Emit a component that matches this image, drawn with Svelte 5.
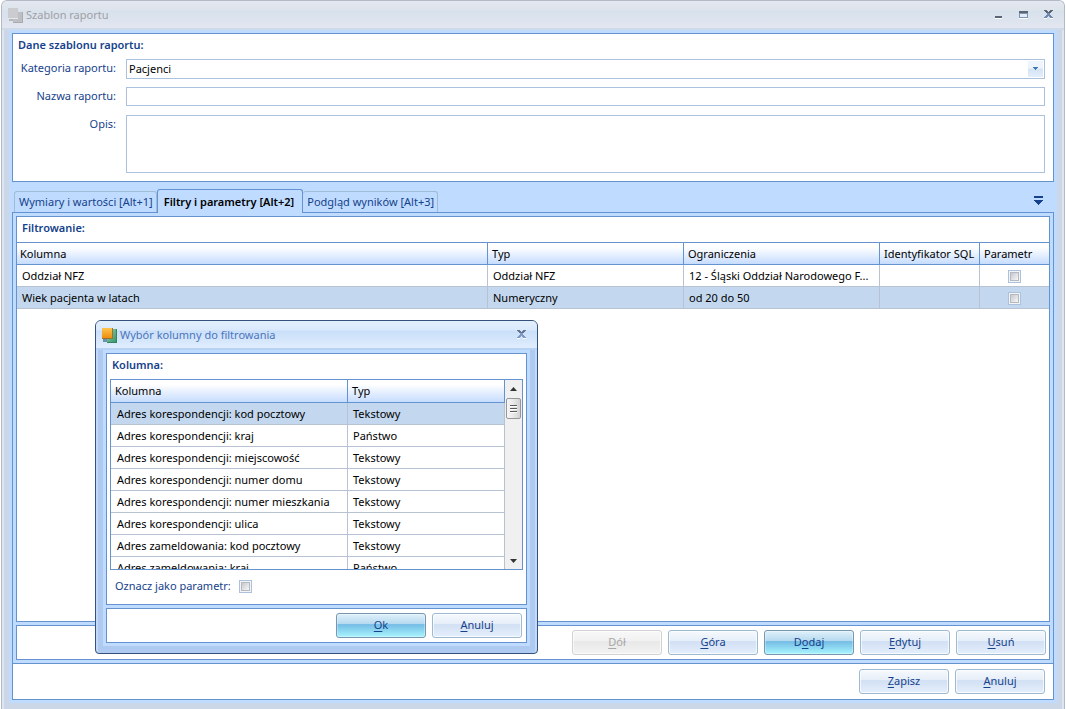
<script>
  const filters = [
    { column: 'Oddział NFZ', type: 'Oddział NFZ', limit: '12 - Śląski Oddział Narodowego F...', selected: false },
    { column: 'Wiek pacjenta w latach', type: 'Numeryczny', limit: 'od 20 do 50', selected: true }
  ];
  const columns = [
    ['Adres korespondencji: kod pocztowy', 'Tekstowy'],
    ['Adres korespondencji: kraj', 'Państwo'],
    ['Adres korespondencji: miejscowość', 'Tekstowy'],
    ['Adres korespondencji: numer domu', 'Tekstowy'],
    ['Adres korespondencji: numer mieszkania', 'Tekstowy'],
    ['Adres korespondencji: ulica', 'Tekstowy'],
    ['Adres zameldowania: kod pocztowy', 'Tekstowy'],
    ['Adres zameldowania: kraj', 'Państwo']
  ];
  let category = $state('Pacjenci');
</script>

<div class="window">
  <header class="titlebar">
    <svg class="logo" width="16" height="16" viewBox="0 0 16 16" shape-rendering="crispEdges" aria-hidden="true">
      <path d="M5 4h10v11H5z" fill="#bdbfc2" /><path d="M5 14h10v1H5zM14 4h1v11h-1z" fill="#a9abae" />
      <path d="M1 9h4v4H1z" fill="#b6b8bb" /><path d="M0 0h10v11H0z" fill="#e4e8ee" /><path d="M0 0h10v10H0z" fill="#cbcccf" />
    </svg>
    <h1>Szablon raportu</h1>
    <div class="winbuttons">
      <button aria-label="Minimalizuj"><svg width="9" height="10" viewBox="0 0 9 10" shape-rendering="crispEdges"><path d="M1 6h7v2H1z" fill="#5b6573" /><path d="M1 8h7v1H1z" fill="#fff" /></svg></button>
      <button aria-label="Maksymalizuj"><svg width="9" height="10" viewBox="0 0 9 10" shape-rendering="crispEdges"><path d="M0 1h9v7H0z" fill="#7c93b5" /><path d="M0 1h9v2H0z" fill="#5b6573" /><path d="M1 4h7v3H1z" fill="#e6ecf5" /><path d="M0 8h9v1H0z" fill="#fff" /></svg></button>
      <button aria-label="Zamknij"><svg width="9" height="10" viewBox="0 0 9 10" shape-rendering="crispEdges"><path d="M0 8h3v1H0zM6 8h3v1H6z" fill="#fff" /><path d="M0 0h3v1H0zM6 0h3v1H6zM1 1h3v1H1zM5 1h3v1H5zM2 2h5v1H2z" fill="#5b6573" /><path d="M3 3h3v2H3zM2 5h5v1H2zM1 6h3v1H1zM5 6h3v1H5zM0 7h3v1H0zM6 7h3v1H6z" fill="#7189b0" /></svg></button>
    </div>
  </header>

  <main class="content">
    <section class="panel data">
      <h2>Dane szablonu raportu:</h2>
      <div class="form">
        <label for="cat">Kategoria raportu:</label>
        <div class="combo">
          <select id="cat" bind:value={category}><option>Pacjenci</option></select>
          <span class="drop"><svg width="5" height="4" viewBox="0 0 5 4" shape-rendering="crispEdges"><path d="M0 0h5v1H0zM1 1h3v1H1zM2 2h1v1H2z" fill="#3f78b5" /></svg></span>
        </div>
        <label for="name">Nazwa raportu:</label>
        <input id="name" type="text" />
        <label for="desc">Opis:</label>
        <textarea id="desc"></textarea>
      </div>
    </section>

    <nav class="tabs">
      <button class="tab">Wymiary i wartości [Alt+1]</button>
      <button class="tab active">Filtry i parametry [Alt+2]</button>
      <button class="tab">Podgląd wyników [Alt+3]</button>
      <button class="more" aria-label="Więcej"><svg width="9" height="9" viewBox="0 0 9 9" shape-rendering="crispEdges"><path d="M0 0h9v2H0zM0 4h9v1H0zM1 5h7v1H1zM2 6h5v1H2zM3 7h3v1H3zM4 8h1v1H4z" fill="#15428b" /></svg></button>
    </nav>

    <section class="tabpage">
      <div class="panel filters">
        <h2>Filtrowanie:</h2>
        <table>
          <colgroup><col /><col class="c-wide" /><col class="c-wide" /><col class="c-sql" /><col class="c-par" /></colgroup>
          <thead><tr><th>Kolumna</th><th>Typ</th><th>Ograniczenia</th><th>Identyfikator SQL</th><th>Parametr</th></tr></thead>
          <tbody>
            {#each filters as f}
              <tr class:selected={f.selected}>
                <td>{f.column}</td><td>{f.type}</td><td>{f.limit}</td><td></td>
                <td class="center"><input type="checkbox" aria-label="Parametr" /></td>
              </tr>
            {/each}
          </tbody>
        </table>
      </div>
      <div class="panel actions">
        <button class="btn" disabled><u>D</u>ół</button>
        <button class="btn"><u>G</u>óra</button>
        <button class="btn primary">D<u>o</u>daj</button>
        <button class="btn"><u>E</u>dytuj</button>
        <button class="btn"><u>U</u>suń</button>
      </div>
    </section>
    <footer class="footer">
      <button class="btn"><u>Z</u>apisz</button>
      <button class="btn"><u>A</u>nuluj</button>
    </footer>
  </main>
</div>

<div class="dialog" role="dialog" aria-labelledby="dlg-title">
  <header class="titlebar">
    <svg class="logo" width="16" height="16" viewBox="0 0 16 16" shape-rendering="crispEdges" aria-hidden="true">
      <defs>
        <linearGradient id="orange" x1="0" y1="0" x2="0" y2="1"><stop offset="0" stop-color="#fcc54e" /><stop offset="1" stop-color="#ee8d11" /></linearGradient>
        <linearGradient id="green" x1="0" y1="0" x2="1" y2="1"><stop offset="0" stop-color="#8fd0ad" /><stop offset="1" stop-color="#2f9468" /></linearGradient>
      </defs>
      <path d="M5 1h10v14H5z" fill="url(#green)" /><path d="M5 14h10v1H5zM14 1h1v14h-1z" fill="#33835f" />
      <path d="M1 10h4v4H1z" fill="#6f8fae" /><path d="M0 0h11v11H0z" fill="#9a7130" /><path d="M0 0h10v10H0z" fill="url(#orange)" />
    </svg>
    <h1 id="dlg-title">Wybór kolumny do filtrowania</h1>
    <div class="winbuttons">
      <button aria-label="Zamknij"><svg width="9" height="10" viewBox="0 0 9 10" shape-rendering="crispEdges"><path d="M0 8h3v1H0zM6 8h3v1H6z" fill="#fff" /><path d="M0 0h3v1H0zM6 0h3v1H6zM1 1h3v1H1zM5 1h3v1H5zM2 2h5v1H2z" fill="#65758f" /><path d="M3 3h3v2H3zM2 5h5v1H2zM1 6h3v1H1zM5 6h3v1H5zM0 7h3v1H0zM6 7h3v1H6z" fill="#7d99c4" /></svg></button>
    </div>
  </header>
  <div class="dialog-body">
    <section class="panel picker">
      <h2>Kolumna:</h2>
      <div class="list">
        <div class="rows">
          <table>
            <colgroup><col /><col class="c-type" /></colgroup>
            <thead><tr><th>Kolumna</th><th>Typ</th></tr></thead>
            <tbody>
              {#each columns as [name, type], i}
                <tr class:selected={i === 0}><td>{name}</td><td>{type}</td></tr>
              {/each}
            </tbody>
          </table>
        </div>
        <div class="scrollbar" aria-hidden="true">
          <svg class="arrow" width="7" height="4" viewBox="0 0 7 4"><path d="M0 4L3.5 0L7 4z" fill="#333" /></svg>
          <span class="thumb"><svg width="7" height="8" viewBox="0 0 7 8" shape-rendering="crispEdges"><path d="M0 0h7v1H0zM0 3h7v1H0zM0 6h7v1H0z" fill="#5a5a5a" /><path d="M0 1h7v1H0zM0 4h7v1H0zM0 7h7v1H0z" fill="#fff" /></svg></span>
          <svg class="arrow down" width="7" height="4" viewBox="0 0 7 4"><path d="M0 0L3.5 4L7 0z" fill="#333" /></svg>
        </div>
      </div>
      <div class="mark">
        <label for="mark">Oznacz jako parametr:</label>
        <input id="mark" type="checkbox" />
      </div>
    </section>
    <div class="panel actions">
      <button class="btn primary"><u>O</u>k</button>
      <button class="btn"><u>A</u>nuluj</button>
    </div>
  </div>
</div>

<style>
  :global(body) { background: #fff; }
  .window, .dialog, button, input, select, textarea { font: 11px/16px "Noto Sans", "Open Sans", sans-serif; }
  .window, .dialog, .window *, .dialog * { box-sizing: border-box; }
  button { padding: 0; margin: 0; border: 0; background: none; color: inherit; }
  svg { display: block; }
  h1, h2 { margin: 0; font-size: 11px; line-height: 16px; }
  h2 { font-weight: 600; }

  .window {
    min-height: 100vh;
    margin: 0 1px;
    display: flex;
    flex-direction: column;
    border: 1px solid #b4bac5;
    border-bottom: 0;
    border-radius: 6px 6px 0 0;
    overflow: hidden;
    background: #cbd7e7;
    box-shadow: inset 2px 0 #dce5f1, inset -2px 0 #dce5f1;
    color: #15428b;
  }
  .titlebar {
    display: flex;
    align-items: center;
    height: 29px;
    padding: 0 11px 0 6px;
    background: linear-gradient(#e3e7f0, #dee4ec 9px, #d7e1ec 10px, #e2e6f0 26px);
    border-bottom: 2px solid #cfdae8;
    color: #a0a0a3;
  }
  .logo { margin-top: 3px; }
  .titlebar h1 { flex: 1; font-weight: 400; padding-left: 2px; }
  .winbuttons { display: flex; gap: 16px; }
  .content {
    flex: 1;
    display: flex;
    flex-direction: column;
    margin: 0 7px 6px;
    padding: 3px;
    background: #bfdbff;
  }
  .panel { background: #fff; border: 1px solid #6593cf; }
  .data { padding: 3px 8px 8px 5px; }
  .form {
    display: grid;
    grid-template-columns: 98px 1fr;
    grid-template-rows: 20px 20px auto;
    column-gap: 10px;
    row-gap: 8px;
    padding-top: 6px;
  }
  .form label { text-align: right; height: 16px; padding-top: 1px; }
  .form input, .form textarea, .combo {
    border: 1px solid #abc1de;
    border-radius: 0;
    background: #fff;
    width: 100%;
    height: 20px;
    padding: 0 2px;
    margin: 0;
    outline: 0;
    resize: none;
    display: block;
  }
  .form input { height: 19px; }
  .form textarea { height: 58px; }
  .form .combo { display: flex; padding: 1px; }
  .combo select { flex: 1; appearance: none; border: 0; padding: 0 1px; background: none; color: #000; outline: 0; }
  .drop {
    width: 15px;
    display: grid;
    place-items: center;
    background: linear-gradient(#eef4fc 45%, #d3e2f5 50%, #e3eefb);
  }

  .tabs { display: flex; align-items: flex-end; height: 30px; padding: 0 2px; }
  .tab {
    height: 21px;
    padding: 0 3px 0 4px;
    border: 1px solid #9fbbd6;
    border-bottom: 0;
    border-radius: 3px 3px 0 0;
    white-space: nowrap;
  }
  .tab + .tab { border-left: 0; }
  .tab.active {
    height: 24px;
    padding: 0 8px 0 6px;
    margin-bottom: -1px;
    border: 1px solid #6593cf;
    border-bottom: 0;
    background: #bfdbff;
    font-weight: 600;
    color: #000;
    z-index: 1;
  }
  .more { margin: 0 9px 7px auto; }
  .tabpage {
    flex: 1;
    display: flex;
    flex-direction: column;
    gap: 3px;
    padding: 3px;
    border: 1px solid #6593cf;
    border-bottom: 0;
  }
  .filters { flex: 1; }
  .filters h2 { padding: 3px 5px 6px; }
  table { width: 100%; table-layout: fixed; border-collapse: separate; border-spacing: 0; color: #000; }
  .c-wide { width: 196px; }
  .c-sql { width: 100px; }
  .c-par { width: 69px; }
  .c-type { width: 157px; }
  th {
    height: 23px;
    padding: 0 4px;
    text-align: left;
    font-weight: 400;
    white-space: nowrap;
    border: solid #6593cf;
    border-width: 1px 1px 1px 0;
    background: linear-gradient(#fff 20%, #e3eeff 60%, #c6dcfe);
  }
  td {
    height: 22px;
    padding: 0 5px;
    white-space: nowrap;
    overflow: hidden;
    text-overflow: ellipsis;
    border: solid #b7c2d3;
    border-width: 0 1px 1px 0;
  }
  .filters th:first-child { padding-left: 3px; }
  .filters th:last-child, .filters td:last-child { border-right: 0; }
  .rows td:first-child { padding-left: 6px; }
  .selected td { background: #c3d8ef; }
  .center { text-align: center; }
  input[type="checkbox"] {
    appearance: none;
    width: 13px;
    height: 13px;
    margin: 0;
    vertical-align: middle;
    border: 1px solid #abc1de;
    box-shadow: inset 0 0 0 1px #f4f4f4, inset 0 0 0 2px #b4b9c2;
    background: linear-gradient(135deg, #c9cdd4 25%, #f6f6f6 80%);
  }
  .actions { display: flex; justify-content: flex-end; gap: 6px; padding: 4px 3px; }
  .btn {
    width: 90px;
    height: 25px;
    padding-bottom: 2px;
    border: 1px solid #9ebad0;
    border-radius: 3px;
    box-shadow: inset 0 0 0 1px #ffffffb0;
    background: linear-gradient(#f6f9fd, #e6eef9 43%, #d2e0f4 46%, #e5effc);
    text-align: center;
    color: #15428b;
  }
  .btn.primary {
    border-color: #7797b1;
    background: linear-gradient(#e0f1fa, #b5d9f0 43%, #74bce5 46%, #a9f5fe);
    box-shadow: inset 0 0 0 1px #ffffff50;
  }
  .btn:disabled {
    border-color: #d2d2d2;
    color: #a7a7a7;
    background: linear-gradient(#f8f8f8, #f1f1f1 43%, #e8e8e8 46%, #f3f3f3);
  }
  .btn u { text-underline-offset: 2px; }
  .footer {
    display: flex;
    justify-content: flex-end;
    gap: 6px;
    padding: 5px 8px;
    background: #fff;
    border: 1px solid #6593cf;
  }

  .dialog {
    position: absolute;
    left: 95px;
    top: 320px;
    width: 443px;
    border: 1px solid #34517e;
    border-radius: 6px 6px 4px 4px;
    overflow: hidden;
    background: #afcaf0;
    box-shadow: inset 2px 0 #c2d9f7, inset -2px 0 #c2d9f7;
    color: #15428b;
  }
  .dialog .titlebar {
    background: linear-gradient(#e3effd, #d9e9fc 9px, #c9dff9 10px, #dfecfd 26px);
    border-color: #b8d2f5;
    color: #4b75bb;
  }
  .dialog-body {
    display: flex;
    flex-direction: column;
    gap: 3px;
    margin: 0 7px 7px;
    padding: 3px;
    background: #bfdbff;
  }
  .dialog .actions { padding-right: 4px; }
  .picker { padding: 3px 3px 0; }
  .picker h2 { padding: 0 2px; }
  .list { display: flex; height: 191px; margin-top: 6px; border: 1px solid #6593cf; }
  .rows { flex: 1; overflow: hidden; }
  .rows th { border-top: 0; }
  .scrollbar {
    width: 17px;
    display: flex;
    flex-direction: column;
    align-items: center;
    padding: 7px 1px 6px;
    background: #f0f0f0;
  }
  .thumb {
    display: grid;
    place-items: center;
    width: 15px;
    height: 21px;
    margin-top: 7px;
    border: 1px solid #979797;
    border-radius: 2px;
    background: linear-gradient(90deg, #f6f6f6, #e8e8e8 50%, #d2d2d6);
  }
  .down { margin-top: auto; }
  .mark { display: flex; align-items: center; gap: 8px; height: 34px; padding: 0 5px 2px; }
</style>
